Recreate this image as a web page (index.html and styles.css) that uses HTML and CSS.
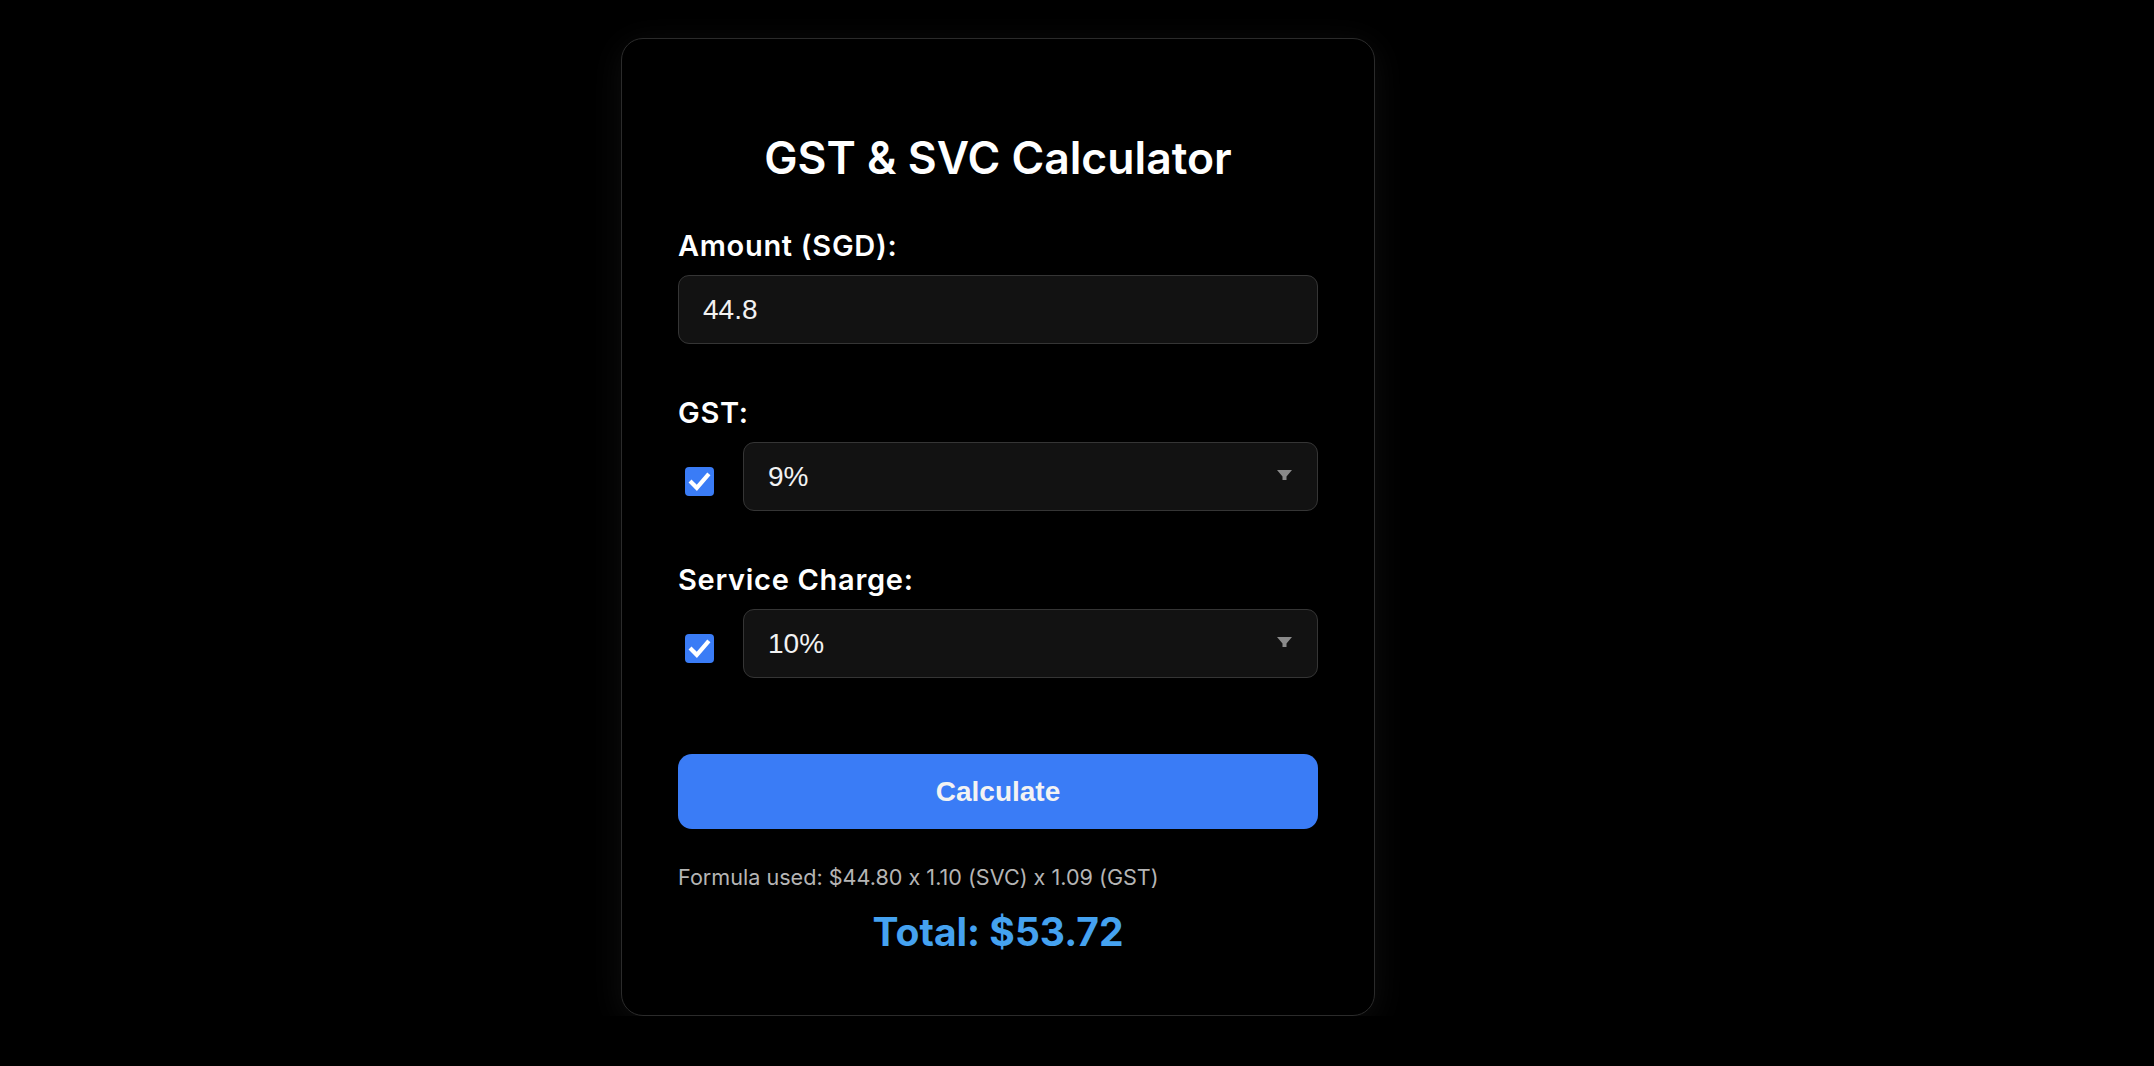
FILE: index.html
```html
<!DOCTYPE html>
<html lang="en">
<head>
<meta charset="utf-8">
<title>GST &amp; SVC Calculator</title>
<link rel="stylesheet" href="styles.css">
</head>
<body>
<div class="page">
  <div class="card">
    <h1 class="title">GST &amp; SVC Calculator</h1>

    <div class="field">
      <label class="label">Amount (SGD):</label>
      <div class="input">44.8</div>
    </div>

    <div class="field">
      <label class="label">GST:</label>
      <div class="row">
        <span class="check"><svg viewBox="0 0 29 29" width="29" height="29"><rect x="0" y="0" width="29" height="29" rx="4" fill="#3a7cf6"/><path d="M6.5 15.5 L11.8 20.8 L22.5 8.5" fill="none" stroke="#fff" stroke-width="4.2" stroke-linecap="square" stroke-linejoin="miter"/></svg></span>
        <div class="select"><span>9%</span><svg class="arrow" viewBox="0 0 15 10" width="15" height="10"><path d="M0 0 H15 L9.5 6.5 V10 H5.5 V6.5 Z" fill="#8a8a8a"/></svg></div>
      </div>
    </div>

    <div class="field">
      <label class="label">Service Charge:</label>
      <div class="row">
        <span class="check"><svg viewBox="0 0 29 29" width="29" height="29"><rect x="0" y="0" width="29" height="29" rx="4" fill="#3a7cf6"/><path d="M6.5 15.5 L11.8 20.8 L22.5 8.5" fill="none" stroke="#fff" stroke-width="4.2" stroke-linecap="square" stroke-linejoin="miter"/></svg></span>
        <div class="select"><span>10%</span><svg class="arrow" viewBox="0 0 15 10" width="15" height="10"><path d="M0 0 H15 L9.5 6.5 V10 H5.5 V6.5 Z" fill="#8a8a8a"/></svg></div>
      </div>
    </div>

    <button class="btn">Calculate</button>

    <p class="formula">Formula used: $44.80 x 1.10 (SVC) x 1.09 (GST)</p>
    <p class="total">Total: $53.72</p>
  </div>
</div>
</body>
</html>
```

FILE: styles.css
```css
* { box-sizing: border-box; }
html, body { margin: 0; padding: 0; background: #000; }
body {
  font-family: Inter, "Noto Sans", sans-serif;
  color: #fff;
  font-feature-settings: "calt" 0;
}

.page {
  padding: 38px 0 0 621px;
}

.card {
  width: 754px;
  border: 1px solid #2b2b2b;
  border-radius: 22px;
  padding: 95px 56px 56px;
  background: #000;
  box-shadow: 0 6px 34px rgba(255,255,255,0.06);
}

.title {
  margin: 0 0 48px;
  font-size: 44.5px;
  line-height: 48px;
  font-weight: 600;
  text-align: center;
  color: #fff;
}

.field { display: flex; flex-direction: column; }
.field + .field { margin-top: 53px; }

.label {
  font-size: 29px;
  line-height: 32px;
  font-weight: 600;
  letter-spacing: 0.7px;
  color: #fff;
  margin-bottom: 13px;
}

.input, .select {
  height: 69px;
  background: #121212;
  border: 1px solid #353535;
  border-radius: 11px;
  font-family: "Liberation Sans", Arial, sans-serif;
  font-size: 28px;
  color: #f2f2f2;
  display: flex;
  align-items: center;
}
.input { padding-left: 24px; }

.row {
  display: flex;
  align-items: center;
  gap: 29px;
  padding-left: 7px;
}
.check { display: flex; width: 29px; height: 29px; margin-top: 10px; flex: none; }
.select {
  flex: 1;
  padding: 0 25px 0 24px;
  justify-content: space-between;
}
.arrow { display: block; margin-top: -3px; }

.btn {
  display: block;
  width: 100%;
  height: 75px;
  margin-top: 76px;
  border: none;
  border-radius: 14px;
  background: #3a7cf6;
  color: #f3f3f3;
  font-family: "Liberation Sans", Arial, sans-serif;
  font-weight: 700;
  font-size: 28px;
}

.formula {
  margin: 33px 0 0;
  font-size: 21.6px;
  line-height: 30px;
  color: #b5b5b5;
  font-weight: 400;
}

.total {
  margin: 13px 0 0;
  font-size: 39px;
  line-height: 54px;
  font-weight: 700;
  color: #45a2f0;
  text-align: center;
}
```
